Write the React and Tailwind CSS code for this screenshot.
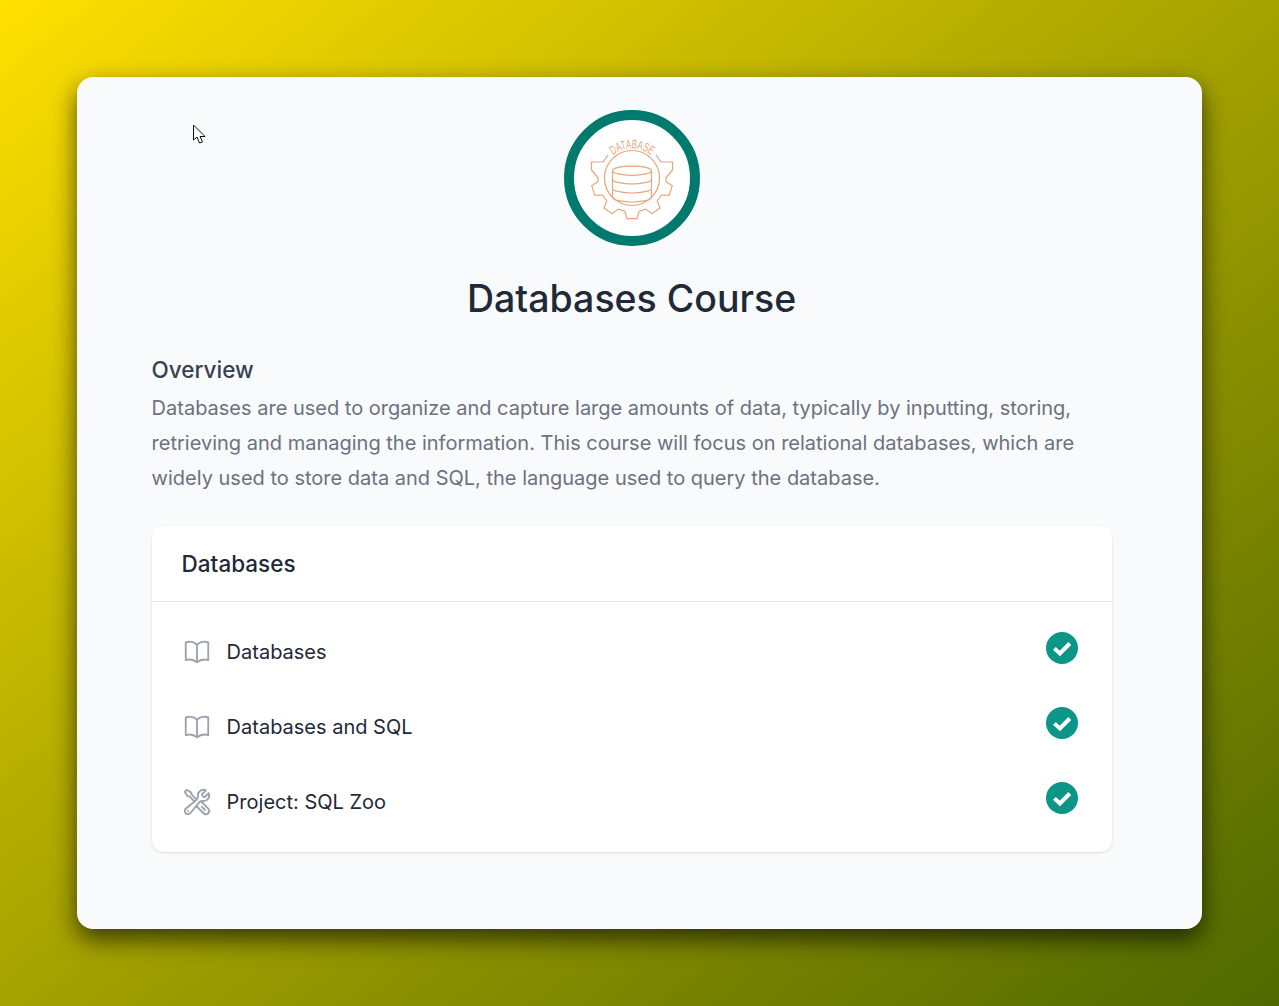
import React from "react";
import { HiOutlineBookOpen, HiOutlineWrenchScrewdriver } from "react-icons/hi2";

function gearPath() {
  const out = 41, root = 34;
  const pts = [];
  const P = (r, deg) => {
    const a = (deg * Math.PI) / 180;
    return [(r * Math.sin(a)).toFixed(2), (r * Math.cos(a)).toFixed(2)];
  };
  for (let k = -2; k <= 2; k++) {
    const c = k * 36;
    pts.push(P(root, c - 12), P(out, c - 7), P(out, c + 7), P(root, c + 12));
  }
  return "M-24 -23L-29 -16L-40.5 -16L-40.5 -8L-34 0L" + pts.map((p) => p.join(" ")).join("L") + "L34 0L40.5 -8L40.5 -16L29 -16L24 -23";
}

function Logo() {
  const s = "#e6a67a";
  return (
    <div className="w-[136px] h-[136px] rounded-full border-[10px] border-[#007a6d] bg-white flex items-center justify-center">
      <svg width="116" height="116" viewBox="-58 -58 116 116" fill="none" stroke={s} strokeWidth="1.2">
        <path d={gearPath()} />
        <circle cx="0" cy="0" r="27.5" />
        <ellipse cx="0" cy="-7.3" rx="19.5" ry="4.6" />
        <path d="M-19.5 -7.3V19.5C-19.5 22 -9 24 0 24C9 24 19.5 22 19.5 19.5V-7.3" />
        <path d="M-19.5 1.5C-19.5 4 -9 6 0 6C9 6 19.5 4 19.5 1.5" />
        <path d="M-19.5 10.5C-19.5 13 -9 15 0 15C9 15 19.5 13 19.5 10.5" />
        <path id="dbarc" d="M-24 -17.5A29.7 29.7 0 0 1 24 -17.5" stroke="none" />
        <text fill={s} stroke="none" fontSize="12.5" style={{ fontFamily: '"Liberation Sans", sans-serif' }}>
          <textPath href="#dbarc" startOffset="50%" textAnchor="middle" textLength="41" lengthAdjust="spacingAndGlyphs">DATABASE</textPath>
        </text>
      </svg>
    </div>
  );
}

function Check() {
  return (
    <svg className="w-8 h-8 mt-[17.5px] mr-[34px]" viewBox="0 0 32 32">
      <circle cx="16" cy="16" r="16" fill="#0b9688" />
      <path d="M8.4 16.4L13.9 21.5L23.8 11.5" fill="none" stroke="#fff" strokeWidth="4" />
    </svg>
  );
}

function Row({ icon: Icon, label }) {
  return (
    <li className="h-[75px] flex justify-between">
      <div className="flex items-center gap-[15px] pl-[30px]">
        <Icon className="w-[30px] h-[30px] text-[#9ca3af]" />
        <span className="text-xl text-[#1f2937]">{label}</span>
      </div>
      <Check />
    </li>
  );
}

export default function App() {
  return (
    <div className="min-h-screen p-[77px] bg-gradient-to-br from-[#ffe000] to-[#4f6800] font-['Inter',sans-serif]">
      <div className="relative h-[852px] rounded-2xl bg-[#f9fafb] shadow-[0_10px_25px_rgba(0,0,0,0.65)] pt-[33px] pl-[74.6px] pr-[90.4px] pb-[77px]">
        <svg className="absolute left-[116px] top-[47px]" width="14" height="21" viewBox="0 0 14 21" fill="#fff" stroke="#111" strokeWidth="1">
          <path d="M0.5 1V16L4 13L6.5 19L9.5 18L7 12.5H12Z" />
        </svg>
        <div className="flex flex-col items-center">
          <Logo />
          <h1 className="mt-[33px] text-[37.5px] leading-10 font-medium text-[#1f2937]">Databases Course</h1>
        </div>
        <h2 className="mt-[37px] text-[22.5px] leading-7 font-medium text-[#374151]">Overview</h2>
        <p className="mt-[7px] text-xl leading-[35px] text-[#6b7280]">
          Databases are used to organize and capture large amounts of data, typically by inputting, storing, retrieving and managing the information. This course will focus on relational databases, which are widely used to store data and SQL, the language used to query the database.
        </p>
        <div className="mt-[30px] bg-white rounded-xl shadow-sm">
          <div className="h-[76px] flex items-center px-[30px] pt-[1px] border-b border-[#e5e7eb]">
            <h3 className="text-[22.5px] font-medium text-[#1f2937]">Databases</h3>
          </div>
          <ul className="py-[12.5px]">
            <Row icon={HiOutlineBookOpen} label="Databases" />
            <Row icon={HiOutlineBookOpen} label="Databases and SQL" />
            <Row icon={HiOutlineWrenchScrewdriver} label="Project: SQL Zoo" />
          </ul>
        </div>
      </div>
    </div>
  );
}
